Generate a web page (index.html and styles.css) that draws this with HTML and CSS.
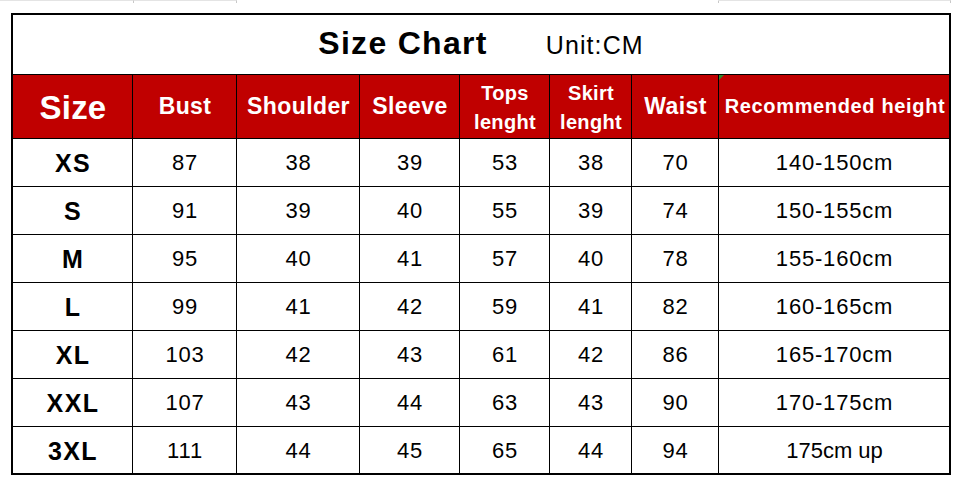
FILE: index.html
```html
<!DOCTYPE html>
<html lang="en">
<head>
<meta charset="utf-8">
<title>Size Chart</title>
<link rel="stylesheet" href="styles.css">
</head>
<body>
<div class="strip">
  <span class="s1"></span><span class="s2"></span><span class="s3"></span><span class="s4"></span>
</div>
<div class="chart">
  <div class="title">
    <span class="title-main">Size Chart</span>
    <span class="title-unit">Unit:CM</span>
  </div>

  <div class="cell head head-size">Size</div>
  <div class="cell head">Bust</div>
  <div class="cell head">Shoulder</div>
  <div class="cell head">Sleeve</div>
  <div class="cell head head-two">Tops<br>lenght</div>
  <div class="cell head head-two">Skirt<br>lenght</div>
  <div class="cell head">Waist</div>
  <div class="cell head head-rec last">Recommended height</div>

  <div class="cell size">XS</div><div class="cell">87</div><div class="cell">38</div><div class="cell">39</div><div class="cell">53</div><div class="cell">38</div><div class="cell">70</div><div class="cell last">140-150cm</div>
  <div class="cell size">S</div><div class="cell">91</div><div class="cell">39</div><div class="cell">40</div><div class="cell">55</div><div class="cell">39</div><div class="cell">74</div><div class="cell last">150-155cm</div>
  <div class="cell size">M</div><div class="cell">95</div><div class="cell">40</div><div class="cell">41</div><div class="cell">57</div><div class="cell">40</div><div class="cell">78</div><div class="cell last">155-160cm</div>
  <div class="cell size">L</div><div class="cell">99</div><div class="cell">41</div><div class="cell">42</div><div class="cell">59</div><div class="cell">41</div><div class="cell">82</div><div class="cell last">160-165cm</div>
  <div class="cell size">XL</div><div class="cell">103</div><div class="cell">42</div><div class="cell">43</div><div class="cell">61</div><div class="cell">42</div><div class="cell">86</div><div class="cell last">165-170cm</div>
  <div class="cell size">XXL</div><div class="cell">107</div><div class="cell">43</div><div class="cell">44</div><div class="cell">63</div><div class="cell">43</div><div class="cell">90</div><div class="cell last">170-175cm</div>
  <div class="cell size bottom">3XL</div><div class="cell bottom">111</div><div class="cell bottom">44</div><div class="cell bottom">45</div><div class="cell bottom">65</div><div class="cell bottom">44</div><div class="cell bottom">94</div><div class="cell bottom last up">175cm up</div>
</div>
</body>
</html>
```

FILE: styles.css
```css
* { box-sizing: border-box; }

html, body {
  margin: 0;
  padding: 0;
  background: #ffffff;
}

body {
  font-family: "Liberation Sans", Arial, sans-serif;
  color: #000;
  width: 965px;
  height: 486px;
  overflow: hidden;
}

.strip {
  display: flex;
  height: 3px;
}
.strip span {
  display: block;
  height: 3px;
  border-top: 1px solid #e4e4e4;
  border-right: 1px solid #c8c8c8;
}
.strip .s1 { width: 134px; }
.strip .s2 { width: 103px; }
.strip .s3 { width: 482px; border-top-color: #fff; }
.strip .s4 { width: 232px; }

.chart {
  margin: 10px 0 0 11px;
  width: 940px;
  border: 2px solid #000;
  display: grid;
  grid-template-columns: 120px 104px 123px 100px 90px 82px 87px 230px;
  grid-template-rows: 60px 64px repeat(6, 48px) 46px;
}

.title {
  grid-column: 1 / -1;
  border-bottom: 1px solid #000;
  display: flex;
  justify-content: center;
  align-items: baseline;
  gap: 58px;
  padding-top: 10px;
}
.title-main {
  font-size: 32px;
  font-weight: bold;
  letter-spacing: 1.3px;
}
.title-unit {
  font-size: 25px;
  letter-spacing: 1.1px;
}

.cell {
  border-right: 1px solid #000;
  border-bottom: 1px solid #000;
  display: flex;
  align-items: center;
  justify-content: center;
  text-align: center;
  font-size: 22px;
  letter-spacing: 0.8px;
  padding-top: 1px;
  padding-left: 1px;
}
.cell.last { border-right: none; }
.cell.bottom { border-bottom: none; padding-top: 2px; }

.head {
  background: #c00000;
  color: #fff;
  font-weight: bold;
  font-size: 23px;
  letter-spacing: 0.4px;
  padding-top: 0;
}
.head-size {
  font-size: 33px;
  letter-spacing: 0.2px;
  padding-top: 2px;
}
.head-two {
  font-size: 20px;
  line-height: 29px;
  letter-spacing: 0.3px;
  padding-top: 2px;
}
.head-rec {
  font-size: 20px;
  letter-spacing: 0.65px;
  position: relative;
  padding-left: 2px;
  padding-top: 0;
}
.head-rec::before {
  content: "";
  position: absolute;
  left: 0;
  top: 0;
  border-top: 5px solid #2e8b2e;
  border-right: 5px solid transparent;
}

.size {
  font-weight: bold;
  font-size: 25px;
  letter-spacing: 1.4px;
}
.up { letter-spacing: 0; }
```
